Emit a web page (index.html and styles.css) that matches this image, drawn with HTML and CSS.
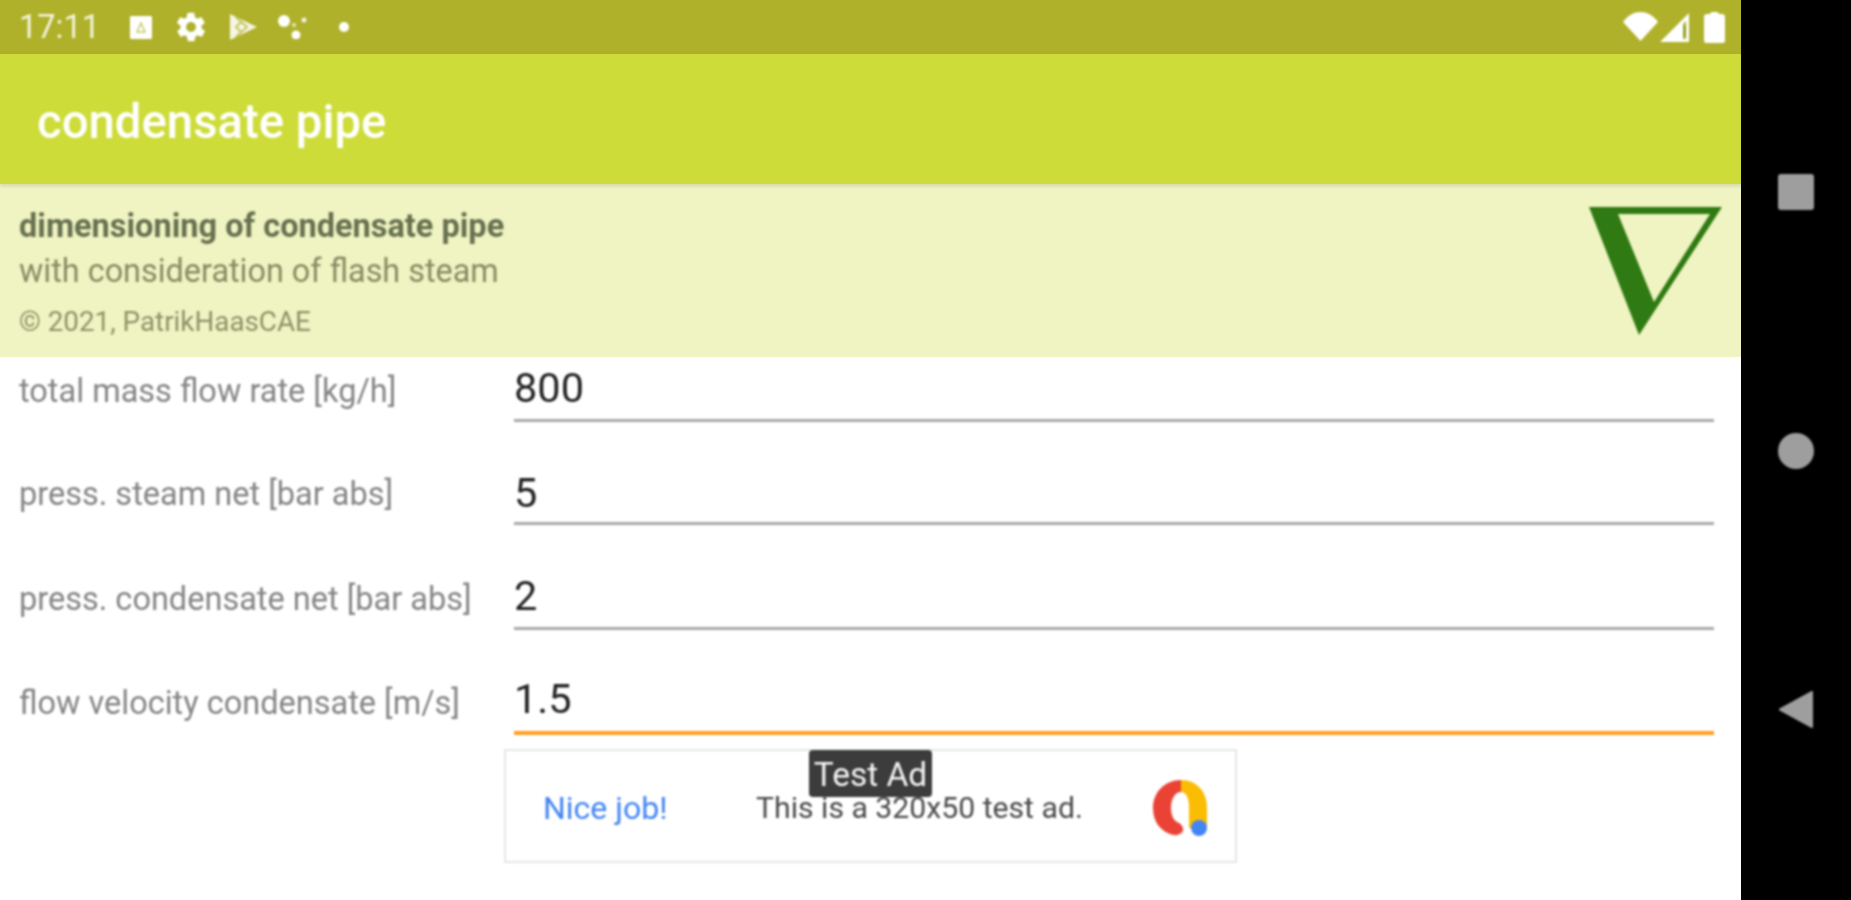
FILE: index.html
```html
<!DOCTYPE html>
<html lang="en">
<head>
<meta charset="utf-8">
<title>condensate pipe</title>
<link rel="stylesheet" href="styles.css">
</head>
<body>
<div class="device">
  <main class="screen">
    <div class="status-bar">
      <span class="clock soft">17:11</span>
      <div class="status-left soft">
        <svg class="ic-a" viewBox="0 0 22 23"><path fill="#fff" d="M1 0h20a1 1 0 0 1 1 1v21a1 1 0 0 1-1 1H1a1 1 0 0 1-1-1V1a1 1 0 0 1 1-1z"/><path fill="none" stroke="#b0b22b" stroke-width="1.500" d="M11 7l-4 9h8z" opacity=".7"/></svg>
        <svg class="ic-gear" viewBox="0 0 24 24"><path fill="#fff" d="M19.400 13c.1-.3.1-.7.1-1s0-.7-.1-1l2.100-1.600c.2-.2.2-.4.1-.6l-2-3.500c-.1-.2-.4-.3-.6-.2l-2.500 1c-.5-.4-1.100-.7-1.700-1l-.4-2.700c0-.2-.2-.4-.5-.4h-4c-.3 0-.5.2-.5.400l-.4 2.700c-.6.300-1.200.6-1.700 1l-2.500-1c-.2-.1-.5 0-.6.2l-2 3.500c-.1.200-.1.400.1.600L4.600 11c0 .3-.1.700-.1 1s0 .7.1 1l-2.100 1.600c-.2.200-.2.400-.1.600l2 3.500c.1.200.4.300.6.200l2.500-1c.5.400 1.100.7 1.700 1l.4 2.700c0 .2.2.400.5.400h4c.3 0 .5-.2.5-.4l.4-2.700c.6-.3 1.200-.6 1.700-1l2.500 1c.2.100.5 0 .6-.2l2-3.500c.1-.2.100-.4-.1-.6zM12 15.500a3.500 3.500 0 1 1 0-7 3.500 3.500 0 0 1 0 7z"/></svg>
        <svg class="ic-play" viewBox="0 0 28 26"><path fill="#fff" d="M1 0l27 13L1 26z" opacity=".88"/><path fill="none" stroke="#b0b22b" stroke-width="1.800" d="M7 3l11 10L7 23M12 8l-5 5 5 5" opacity=".75"/></svg>
        <svg class="ic-dots" viewBox="0 0 30 24"><circle cx="6" cy="6" r="6" fill="#fff"/><circle cx="26" cy="5" r="2.500" fill="#fff" opacity=".85"/><circle cx="18" cy="20" r="4.500" fill="#fff"/><circle cx="16" cy="10" r="2" fill="#fff" opacity=".7"/></svg>
        <span class="ic-dot"></span>
      </div>
      <div class="status-right soft">
        <svg class="ic-wifi" viewBox="0 0 35 29"><path fill="#fff" d="M0 10C5 3 11 0 17.500 0S30 3 35 10L17.500 29z"/></svg>
        <svg class="ic-signal" viewBox="0 0 29 29"><path fill="#fff" d="M29 0v29H0zM26 8l-3 3v15h3z" fill-rule="evenodd"/><path fill="#4f7a1a" d="M24 13h1.500v11H24z" opacity=".6"/></svg>
        <svg class="ic-battery" viewBox="0 0 21 31"><path fill="#fff" d="M6 2a1 1 0 0 1 1-1V0h7v1a1 1 0 0 1 1 1h3a3 3 0 0 1 3 3v24a2 2 0 0 1-2 2H2a2 2 0 0 1-2-2V5a3 3 0 0 1 3-3z"/></svg>
      </div>
    </div>

    <header class="app-bar"><span class="soft">condensate pipe</span></header>

    <section class="intro">
      <div class="intro-text soft">
        <div class="intro-title">dimensioning of condensate pipe</div>
        <div class="intro-sub">with consideration of flash steam</div>
        <div class="intro-copy">© 2021, PatrikHaasCAE</div>
      </div>
      <svg class="logo soft" viewBox="0 0 133 128"><path fill="#2f7a12" fill-rule="evenodd" d="M0 0h133L50 128zM29 7l36 88L121 7z"/></svg>
    </section>

    <section class="form soft">
      <div class="row row-first"><label class="label">total mass flow rate [kg/h]</label><div class="field">800</div></div>
      <div class="row row-second"><label class="label">press. steam net [bar abs]</label><div class="field">5</div></div>
      <div class="row row-tall"><label class="label">press. condensate net [bar abs]</label><div class="field">2</div></div>
      <div class="row row-tall row-last"><label class="label">flow velocity condensate [m/s]</label><div class="field field-active">1.5</div></div>
    </section>

    <aside class="ad soft">
      <span class="ad-badge">Test Ad</span>
      <span class="ad-link">Nice job!</span>
      <span class="ad-text">This is a 320x50 test ad.</span>
      <svg class="ad-logo" viewBox="0 0 56 56">
        <path fill="#fbbc04" d="M28 0c16 0 26 12 26 27v21H36V27c0-9-3-15-8-15z"/>
        <path fill="#ea4335" d="M28 0C12 0 0 12 0 28c0 14 8 24 20 27 7 1 11-3 10-7-1-3-3-5-6-6-4-2-6-8-6-14 0-9 4-16 10-16z"/>
        <circle cx="46" cy="48" r="8" fill="#4285f4"/>
      </svg>
    </aside>
  </main>

  <nav class="nav-bar">
    <span class="nav-square soft"></span>
    <span class="nav-circle soft"></span>
    <svg class="nav-back soft" viewBox="0 0 34 37"><path fill="#9e9e9e" stroke="#9e9e9e" stroke-width="2" stroke-linejoin="round" d="M33 1v35L1 18.500z"/></svg>
  </nav>
</div>
</body>
</html>
```

FILE: styles.css
```css
* { box-sizing: border-box; }

html, body {
  margin: 0;
  height: 100%;
  overflow: hidden;
  background: #000;
}

body { font-family: Roboto, "Liberation Sans", sans-serif; }

.device {
  display: flex;
  width: 1851px;
  height: 900px;
}

/* the reference is an upscaled capture, so its content is slightly soft */
.soft { filter: blur(0.8px); }

.screen {
  position: relative;
  width: 1742px;
  flex: none;
  background: #fff;
  box-shadow: 1px 0 1px rgba(120, 120, 120, .6);
}

/* status bar */
.status-bar {
  display: flex;
  align-items: center;
  height: 54px;
  padding: 0 17px 0 19px;
  background: #afb12b;
  color: #f4f4dc;
}

.clock { width: 111px; font-size: 32.500px; }

.status-left { display: flex; align-items: center; }
.ic-a { width: 22px; height: 23px; }
.ic-gear { width: 34px; height: 34px; margin-left: 22px; }
.ic-play { width: 28px; height: 26px; margin-left: 21px; }
.ic-dots { width: 30px; height: 24px; margin-left: 21px; }
.ic-dot {
  width: 10px;
  height: 10px;
  margin-left: 31px;
  border-radius: 50%;
  background: #fff;
}

.status-right { display: flex; align-items: center; margin-left: auto; }
.ic-wifi { width: 35px; height: 29px; margin-top: -2px; }
.ic-signal { width: 29px; height: 29px; margin-left: 2px; }
.ic-battery { width: 21px; height: 31px; margin-left: 15px; }

/* app bar */
.app-bar {
  display: flex;
  align-items: center;
  height: 130px;
  padding: 6px 0 0 37px;
  background: #cddc39;
  color: #fff;
  font-size: 47.300px;
  font-weight: 500;
  box-shadow: 0 2px 4px rgba(0, 0, 0, .12);
  position: relative;
}

/* intro */
.intro {
  display: flex;
  justify-content: space-between;
  height: 173px;
  padding: 23px 20px 0 19px;
  background: #f0f4c3;
}

.intro-title { font-size: 32.500px; font-weight: 700; line-height: 38px; color: #66704f; }
.intro-sub { margin-top: 4px; font-size: 32.400px; line-height: 44px; color: #858b62; }
.intro-copy { margin-top: 9px; font-size: 27.800px; line-height: 40px; color: #8c9168; }
.logo { width: 133px; height: 128px; }

/* form */
.form { display: flex; flex-direction: column; padding: 0 28px 0 19px; }

.row { display: flex; align-items: flex-end; height: 103px; }
.row-first { height: 65px; }
.row-tall { height: 105px; }

.label {
  width: 495px;
  flex: none;
  padding-bottom: 11px;
  font-size: 32.500px;
  line-height: 40px;
  color: #858585;
}

.row-last .label { padding-bottom: 12px; }

.field {
  flex: 1;
  height: 58px;
  border-bottom: 3px solid #a8a8a8;
  font-size: 41.500px;
  line-height: 48px;
  color: #222;
}

.row-second .field { padding-top: 2px; }
.field-active { border-bottom: 4px solid #ff9f1c; line-height: 44px; }

/* ad */
.ad {
  position: absolute;
  left: 504px;
  top: 749px;
  display: flex;
  align-items: center;
  width: 733px;
  height: 114px;
  border: 2px solid #e3e7e8;
  background: #fff;
}

.ad-badge {
  position: absolute;
  left: 303px;
  top: -1px;
  width: 123px;
  height: 47px;
  border-radius: 4px;
  background: #3c3c3c;
  color: #f4f4f4;
  font-size: 33.500px;
  line-height: 50px;
  text-align: center;
}

.ad-link { margin: 3px 0 0 37px; width: 213px; flex: none; font-size: 32px; color: #4285f4; }
.ad-text { margin-top: 2px; font-size: 30.200px; color: #4a4a4a; }
.ad-logo { position: absolute; left: 647px; top: 29px; width: 56px; height: 56px; }

/* navigation */
.nav-bar {
  display: flex;
  flex-direction: column;
  align-items: center;
  justify-content: space-between;
  flex: 1;
  padding: 174px 0 172px;
  background: #000;
  transform: translateX(-1px);
}

.nav-square { width: 36px; height: 36px; border-radius: 3px; background: #9e9e9e; }
.nav-circle { width: 36px; height: 36px; border-radius: 50%; background: #9e9e9e; }
.nav-back { width: 34px; height: 37px; }
```
